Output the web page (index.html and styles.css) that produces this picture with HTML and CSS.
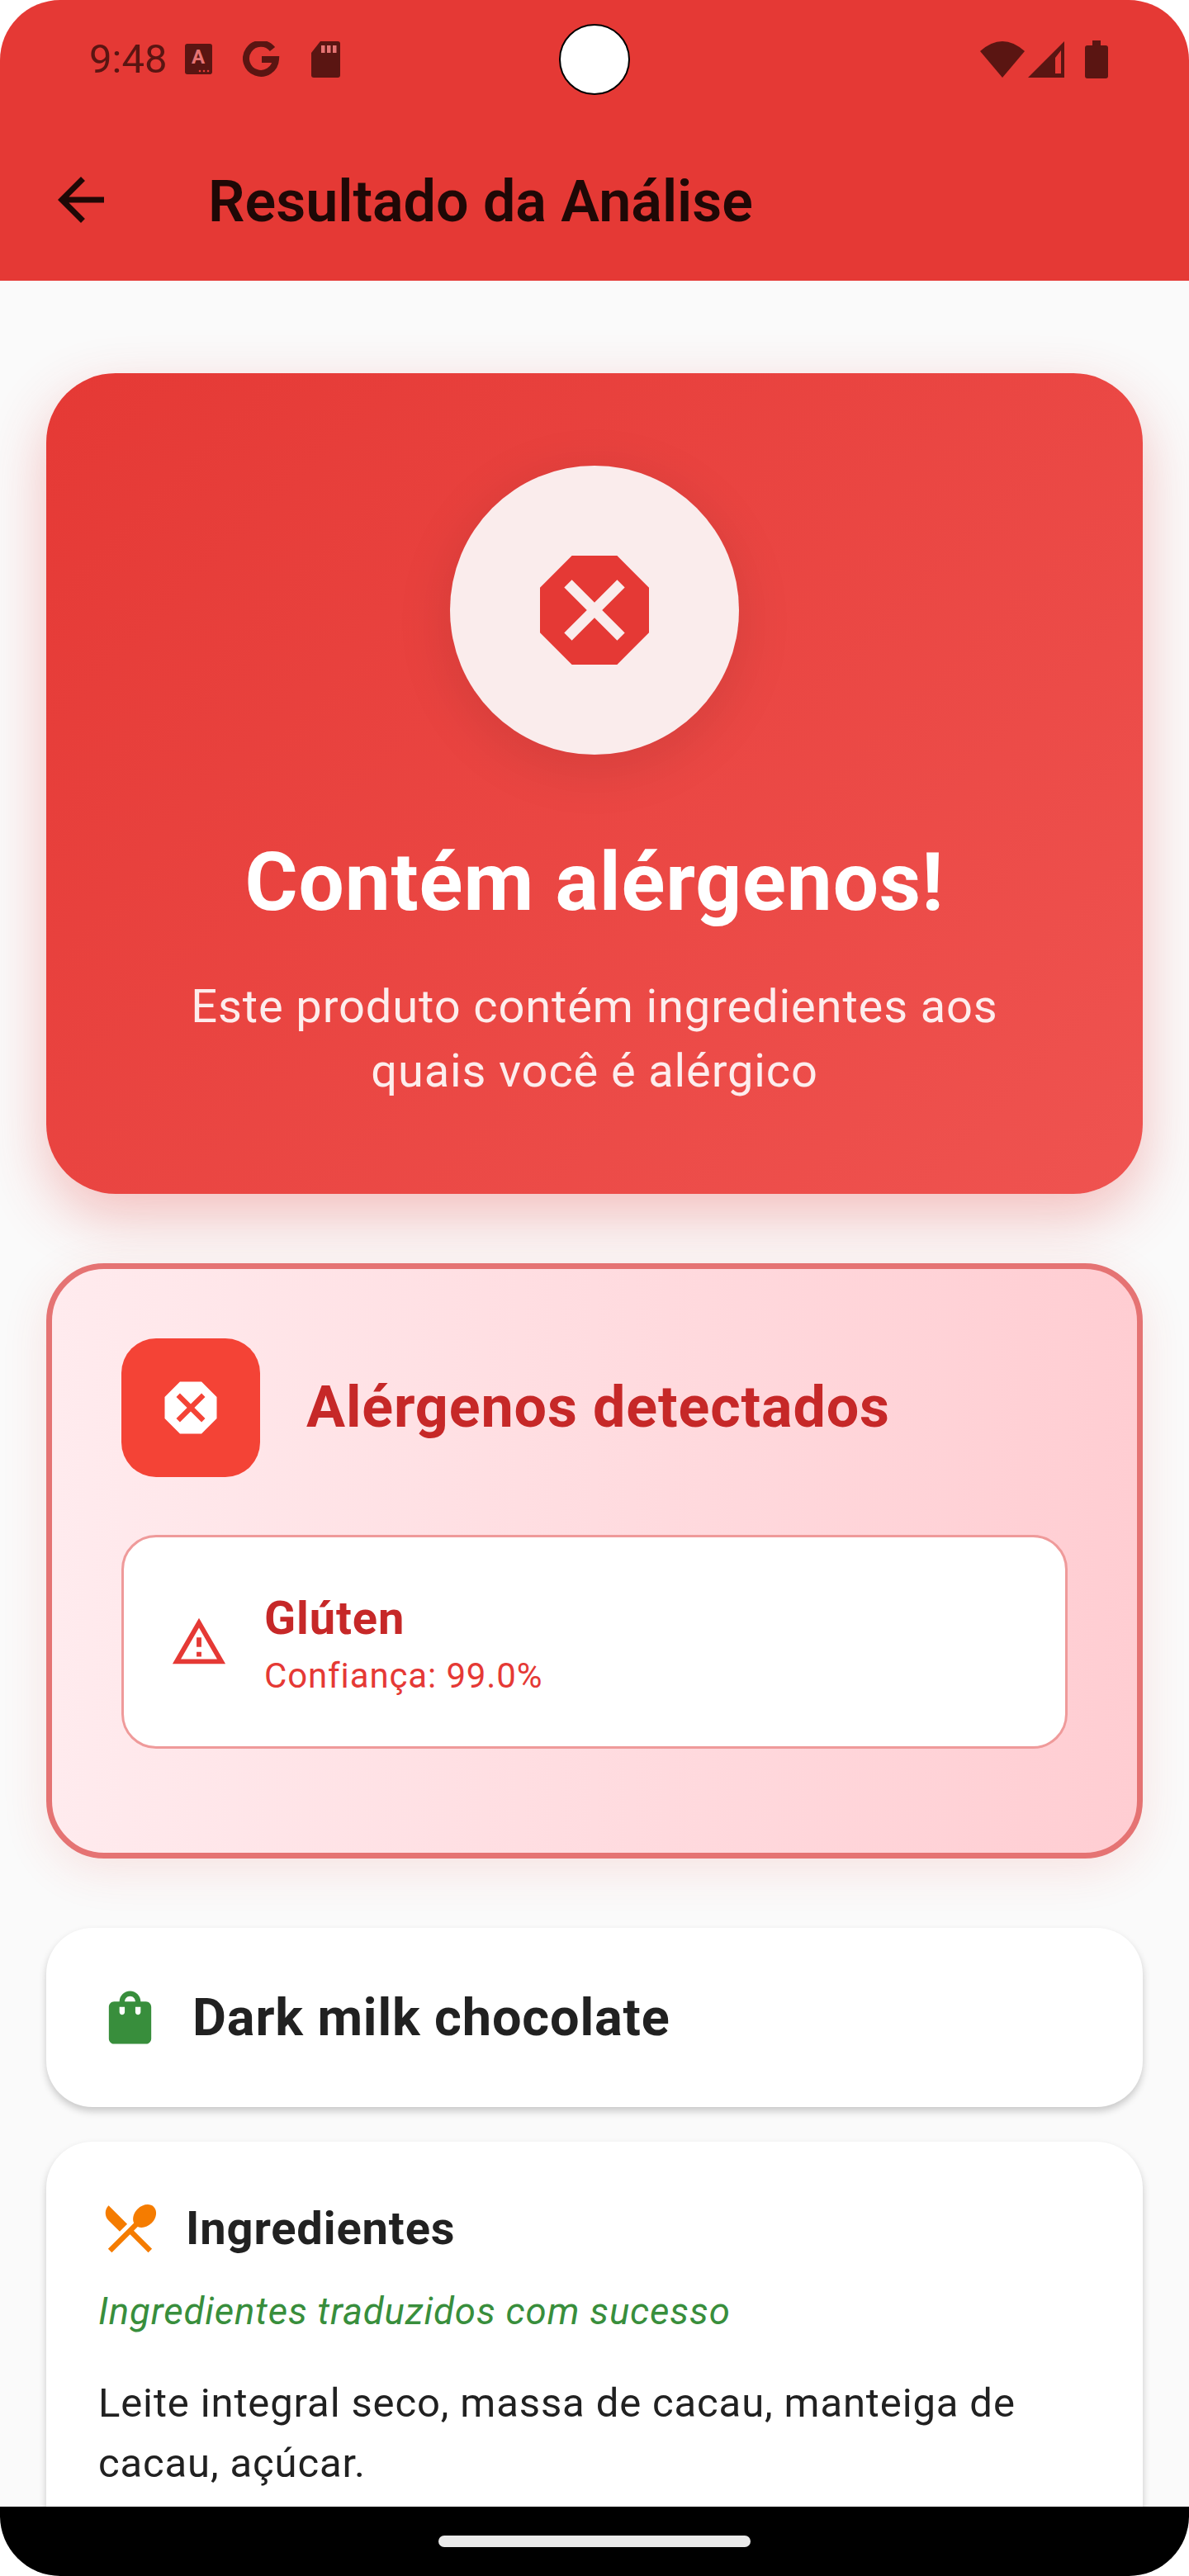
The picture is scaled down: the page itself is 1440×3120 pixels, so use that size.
FILE: index.html
```html
<!DOCTYPE html>
<html>
<head>
  <meta charset="UTF-8">
  <title>Resultado da Análise</title>
  <link rel="stylesheet" href="styles.css">
</head>
<body>
  <div class="phone">
    <header class="top">
      <div class="status-bar">
        <div class="status-left">
          <span class="time">9:48</span>
          <svg class="st-a" width="33" height="37" viewBox="0 0 33 37">
            <rect width="33" height="37" rx="3" fill="#5a1512"/>
            <text x="16" y="24" class="st-a-letter">A</text>
            <circle cx="18" cy="33" r="1.3" fill="#e53935"/>
            <circle cx="23" cy="33" r="1.3" fill="#e53935"/>
            <circle cx="28" cy="33" r="1.3" fill="#e53935"/>
          </svg>
          <svg class="st-g" width="45" height="44" viewBox="0 0 45 44">
            <path d="M36 9.5A18 18 0 1 0 40 22H23" fill="none" stroke="#5a1512" stroke-width="8"/>
          </svg>
          <svg class="st-sd" width="35" height="44" viewBox="0 0 35 44">
            <path d="M11 0H32a3 3 0 0 1 3 3V41a3 3 0 0 1-3 3H3a3 3 0 0 1-3-3V14Z" fill="#5a1512"/>
            <rect x="12" y="5" width="4.5" height="9" fill="#e57373"/>
            <rect x="19" y="5" width="4.5" height="9" fill="#e57373"/>
            <rect x="26" y="5" width="4.5" height="9" fill="#e57373"/>
          </svg>
        </div>
        <div class="status-right">
          <svg width="54" height="44" viewBox="0 0 54 44">
            <path d="M27 44L0 12Q27-12 54 12Z" fill="#5a1512"/>
          </svg>
          <svg width="44" height="44" viewBox="0 0 44 44">
            <path d="M44 0V44H0ZM40 11L33 20V39H40Z" fill="#5a1512" fill-rule="evenodd"/>
          </svg>
          <svg class="st-batt" width="28" height="46" viewBox="0 0 28 46">
            <path d="M9 0H19V6H25a3 3 0 0 1 3 3V43a3 3 0 0 1-3 3H3a3 3 0 0 1-3-3V9a3 3 0 0 1 3-3H9Z" fill="#5a1512"/>
          </svg>
        </div>
      </div>
      <div class="camera"></div>
      <div class="toolbar">
        <svg class="back" width="84" height="84" viewBox="0 0 24 24">
          <path d="M20 11H7.83l5.59-5.59L12 4l-8 8 8 8 1.41-1.41L7.83 13H20v-2z"/>
        </svg>
        <h1 class="page-title">Resultado da Análise</h1>
      </div>
    </header>

    <main class="content">
      <section class="hero">
        <div class="hero-circle">
          <svg width="176" height="176" viewBox="0 0 24 24">
            <path d="M15.73 3H8.27L3 8.27v7.46L8.27 21h7.46L21 15.73V8.27L15.73 3zM17 15.74L15.74 17 12 13.26 8.26 17 7 15.74 10.74 12 7 8.26 8.26 7 12 10.74 15.74 7 17 8.26 13.26 12 17 15.74z" fill="#e53935" fill-rule="evenodd"/>
          </svg>
        </div>
        <h2 class="hero-title">Contém alérgenos!</h2>
        <p class="hero-text">Este produto contém ingredientes aos quais você é alérgico</p>
      </section>

      <section class="detected">
        <div class="detected-head">
          <div class="detected-icon">
            <svg width="84" height="84" viewBox="0 0 24 24">
              <path d="M15.73 3H8.27L3 8.27v7.46L8.27 21h7.46L21 15.73V8.27L15.73 3zM17 15.74L15.74 17 12 13.26 8.26 17 7 15.74 10.74 12 7 8.26 8.26 7 12 10.74 15.74 7 17 8.26 13.26 12 17 15.74z" fill="#fff" fill-rule="evenodd"/>
            </svg>
          </div>
          <h3 class="detected-title">Alérgenos detectados</h3>
        </div>
        <div class="allergen">
          <svg width="70" height="70" viewBox="0 0 24 24">
            <path d="M12 5.99L19.53 19H4.47L12 5.99M12 2L1 21h22L12 2zm1 14h-2v2h2v-2zm0-6h-2v4h2v-4z" fill="#e53935"/>
          </svg>
          <div class="allergen-info">
            <div class="allergen-name">Glúten</div>
            <div class="allergen-conf">Confiança: 99.0%</div>
          </div>
        </div>
      </section>

      <section class="card product">
        <svg width="77" height="77" viewBox="0 0 24 24">
          <path d="M18 6h-2c0-2.21-1.79-4-4-4S8 3.79 8 6H6c-1.1 0-2 .9-2 2v12c0 1.1.9 2 2 2h12c1.1 0 2-.9 2-2V8c0-1.1-.9-2-2-2zm-8 4c0 .55-.45 1-1 1s-1-.45-1-1V8h2v2zm2-6c1.1 0 2 .9 2 2h-4c0-1.1.9-2 2-2zm4 6c0 .55-.45 1-1 1s-1-.45-1-1V8h2v2z" fill="#388e3c"/>
        </svg>
        <h3 class="product-name">Dark milk chocolate</h3>
      </section>

      <section class="card ingredients">
        <div class="ingredients-head">
          <svg width="77" height="77" viewBox="0 0 24 24">
            <path d="M8.1 13.34l2.83-2.83L3.91 3.5c-1.56 1.56-1.56 4.09 0 5.66l4.19 4.18zm6.78-1.81c1.53.71 3.68.21 5.27-1.38 1.91-1.91 2.28-4.65.81-6.12-1.46-1.46-4.2-1.1-6.12.81-1.59 1.59-2.09 3.74-1.38 5.27L3.7 19.87l1.41 1.41L12 14.41l6.88 6.88 1.41-1.41L13.41 13l1.47-1.47z" fill="#f57c00"/>
          </svg>
          <h3 class="ingredients-title">Ingredientes</h3>
        </div>
        <p class="translated">Ingredientes traduzidos com sucesso</p>
        <p class="ingredients-text">Leite integral seco, massa de cacau, manteiga de cacau, açúcar.</p>
      </section>
    </main>

    <div class="nav-bar"><div class="nav-pill"></div></div>
  </div>
</body>
</html>
```

FILE: styles.css
```css
* {
  box-sizing: border-box;
}
body {
  margin: 0;
  background: #fff;
  font-family: Roboto, sans-serif;
}
h1, h2, h3, p {
  margin: 0;
}
.phone {
  position: relative;
  display: flex;
  flex-direction: column;
  width: 1440px;
  height: 3120px;
  border-radius: 73px;
  overflow: hidden;
  background: #fafafa;
}
.top {
  position: relative;
  flex: none;
  height: 340px;
  background: #e53935;
}
.status-bar {
  display: flex;
  align-items: center;
  justify-content: space-between;
  height: 144px;
  padding: 0 98px 0 108px;
}
.status-left {
  display: flex;
  align-items: center;
  height: 44px;
  margin-top: -1px;
}
.time {
  font-size: 49px;
  color: #5a1512;
  width: 116px;
}
.st-a {
  margin-right: 37px;
  margin-top: -1px;
}
.st-g {
  margin-right: 38px;
}
.st-a-letter {
  font-family: Roboto, sans-serif;
  font-size: 24px;
  font-weight: 700;
  fill: #e57373;
  text-anchor: middle;
}
.status-right {
  display: flex;
  align-items: center;
  gap: 4px;
}
.st-batt {
  margin-left: 21px;
}
.camera {
  position: absolute;
  top: 29px;
  left: 677px;
  width: 86px;
  height: 86px;
  border: 2px solid #000;
  border-radius: 50%;
  background: #fff;
}
.toolbar {
  display: flex;
  align-items: center;
  height: 196px;
  padding-left: 56px;
}
.back {
  fill: #1f0806;
  margin-right: 112px;
}
.page-title {
  padding-top: 3px;
  font-size: 70px;
  font-weight: 600;
  color: #1f0806;
}
.content {
  flex: 1;
  min-height: 0;
  overflow: hidden;
  padding: 112px 56px 0;
}
.hero {
  display: flex;
  flex-direction: column;
  align-items: center;
  height: 994px;
  padding: 112px 112px 0;
  border-radius: 84px;
  background: linear-gradient(135deg, #e53935, #ef5350);
  box-shadow: 0 28px 70px rgba(229, 57, 53, 0.3);
  text-align: center;
}
.hero-circle {
  display: flex;
  align-items: center;
  justify-content: center;
  width: 350px;
  height: 350px;
  border-radius: 50%;
  background: #faecec;
  box-shadow: 0 14px 70px rgba(0, 0, 0, 0.1);
}
.hero-title {
  margin-top: 97px;
  font-size: 98px;
  font-weight: 700;
  line-height: 115px;
  letter-spacing: 0.875px;
  color: #fff;
}
.hero-text {
  margin-top: 54px;
  font-size: 56px;
  line-height: 78px;
  letter-spacing: 0.875px;
  color: rgba(255, 255, 255, 0.9);
}
.detected {
  height: 721px;
  margin-top: 84px;
  padding: 84px 84px 0;
  border: 7px solid #e57373;
  border-radius: 70px;
  background: linear-gradient(90deg, #ffebee, #ffcdd2);
  box-shadow: 0 14px 56px rgba(229, 57, 53, 0.12);
}
.detected-head {
  display: flex;
  align-items: center;
  gap: 56px;
  margin-bottom: 70px;
}
.detected-icon {
  display: flex;
  align-items: center;
  justify-content: center;
  width: 168px;
  height: 168px;
  border-radius: 42px;
  background: #f44336;
}
.detected-title {
  margin-top: -3px;
  font-size: 70px;
  font-weight: 700;
  letter-spacing: 0.875px;
  color: #c62828;
}
.allergen {
  display: flex;
  align-items: center;
  gap: 44px;
  height: 259px;
  padding-left: 56px;
  border: 3.5px solid #ef9a9a;
  border-radius: 42px;
  background: #fff;
}
.allergen-info {
  padding-top: 3px;
}
.allergen-name {
  font-size: 56px;
  font-weight: 700;
  letter-spacing: 0.875px;
  color: #c62828;
}
.allergen-conf {
  margin-top: 12px;
  font-size: 42px;
  letter-spacing: 0.875px;
  color: #e53935;
}
.card {
  border-radius: 56px;
  background: #fff;
  box-shadow: 0 5px 10px rgba(0, 0, 0, 0.2);
}
.product {
  display: flex;
  align-items: center;
  gap: 37px;
  height: 217px;
  margin-top: 84px;
  padding: 0 63px;
}
.product-name {
  font-size: 63px;
  font-weight: 700;
  letter-spacing: 0.875px;
  color: #212121;
}
.ingredients {
  margin-top: 42px;
  height: 600px;
  padding: 66px 63px 0;
}
.ingredients-head {
  display: flex;
  align-items: center;
  gap: 29px;
}
.ingredients-title {
  font-size: 56px;
  font-weight: 700;
  letter-spacing: 0.875px;
  color: #212121;
}
.translated {
  margin-top: 36px;
  font-size: 45.5px;
  font-style: italic;
  letter-spacing: 0.875px;
  color: #388e3c;
}
.ingredients-text {
  margin-top: 48px;
  font-size: 49px;
  line-height: 73px;
  letter-spacing: 0.875px;
  color: #212121;
}
.nav-bar {
  display: flex;
  align-items: center;
  justify-content: center;
  flex: none;
  height: 84px;
  background: #000;
}
.nav-pill {
  width: 378px;
  height: 14px;
  border-radius: 7px;
  background: #eaeaea;
}
```
